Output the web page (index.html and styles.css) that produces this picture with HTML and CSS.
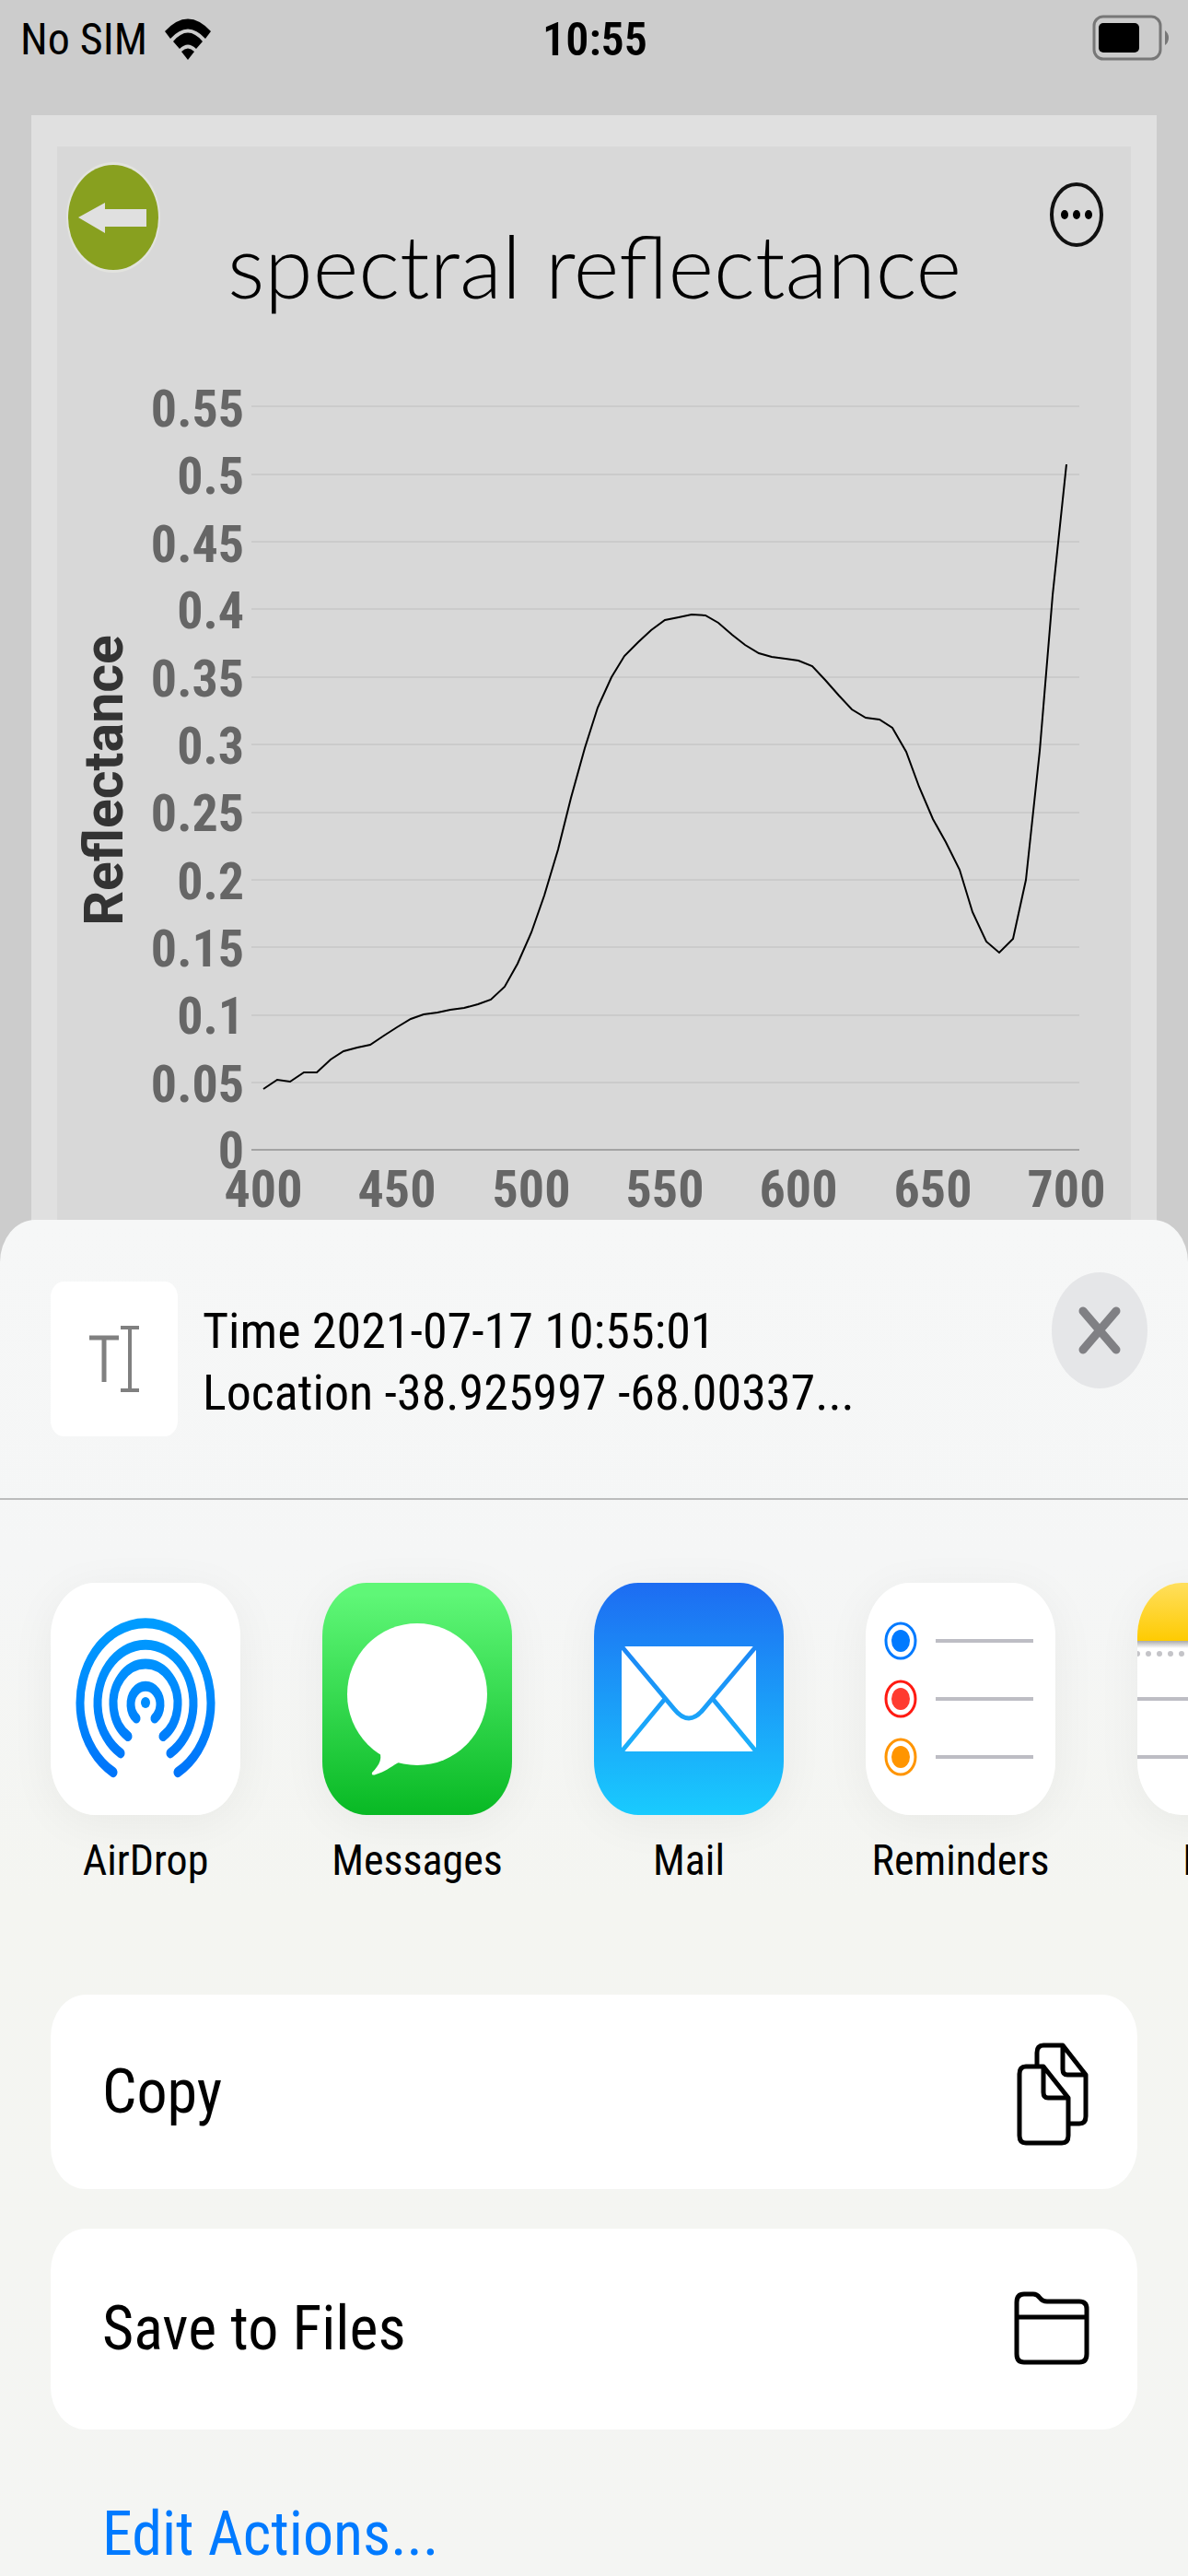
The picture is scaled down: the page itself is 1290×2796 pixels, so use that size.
FILE: index.html
```html
<!DOCTYPE html>
<html lang="en">
<head>
<meta charset="utf-8">
<meta name="viewport" content="width=device-width, initial-scale=1">
<title>spectral reflectance</title>
<link rel="stylesheet" href="styles.css">
</head>
<body>
<div class="statusbar">
  <div class="carrier">
    <span>No SIM</span>
    <svg class="wifi" viewBox="0 0 50 46" aria-hidden="true">
      <path d="M0 14 Q25 -13 50 14 L44 22 Q25 1 6 22 Z"/>
      <path d="M9 25 Q25 6 41 25 L34 33 Q25 24 16 33 Z"/>
      <path d="M18 36 Q25 29 32 36 L25 45 Z"/>
    </svg>
  </div>
  <time class="clock">10:55</time>
  <div class="battery-slot">
    <svg class="battery" viewBox="0 0 84 50" aria-hidden="true">
      <rect x="2" y="2" width="72" height="46" rx="10" fill="none" stroke="#777" stroke-width="3"/>
      <rect x="7" y="9" width="44" height="32" rx="5"/>
      <path d="M79 17 Q83 20 83 25 Q83 30 79 33 Z" fill="#777"/>
    </svg>
  </div>
</div>

<main class="screen">
  <div class="panel">
    <header class="panel-head">
      <button class="icon-button" type="button" aria-label="Back">
        <svg class="back" viewBox="0 0 104 122">
          <ellipse cx="52" cy="61" rx="51" ry="60" fill="#e2e3de"/>
          <ellipse cx="52" cy="61" rx="49" ry="57" fill="#88a01f"/>
          <path d="M14 61 L43 45 V52 H88 V71 H43 V78 Z" fill="#e0e0e0"/>
        </svg>
      </button>
      <h1 class="title">spectral reflectance</h1>
      <button class="icon-button icon-button-more" type="button" aria-label="More">
        <svg class="more" viewBox="0 0 60 72">
          <ellipse cx="30" cy="36" rx="27" ry="33" fill="none" stroke="#111" stroke-width="4"/>
          <ellipse cx="17" cy="36" rx="4" ry="5"/><ellipse cx="30" cy="36" rx="4" ry="5"/><ellipse cx="43" cy="36" rx="4" ry="5"/>
        </svg>
      </button>
    </header>
    <svg class="chart" viewBox="0 0 1166 970" role="img" aria-label="Reflectance by wavelength">
      <path class="grid" d="M211 41H1110M211 115H1110M211 188H1110M211 261H1110M211 335H1110M211 408H1110M211 482H1110M211 555H1110M211 628H1110M211 702H1110M211 775H1110"/>
      <path class="axis" d="M211 848H1110"/>
      <g class="tick tick-y">
        <text x="203" y="63">0.55</text><text x="203" y="136">0.5</text>
        <text x="203" y="210">0.45</text><text x="203" y="282">0.4</text>
        <text x="203" y="356">0.35</text><text x="203" y="429">0.3</text>
        <text x="203" y="502">0.25</text><text x="203" y="576">0.2</text>
        <text x="203" y="649">0.15</text><text x="203" y="722">0.1</text>
        <text x="203" y="796">0.05</text><text x="203" y="868">0</text>
      </g>
      <g class="tick tick-x">
        <text x="224" y="910">400</text><text x="369" y="910">450</text>
        <text x="515" y="910">500</text><text x="660" y="910">550</text>
        <text x="805" y="910">600</text><text x="951" y="910">650</text>
        <text x="1096" y="910">700</text>
      </g>
      <text class="axis-name" transform="translate(71 447) rotate(-90)">Reflectance</text>
      <polyline class="curve" points="224,782 239,772 253,774 268,764 282,764 297,750 311,741 326,737 340,734 355,724 369,715 384,706 398,701 413,699 427,696 442,694 457,690 471,685 486,671 500,646 515,612 529,572 544,522 558,466 573,412 587,368 602,335 616,312 631,297 645,284 660,273 675,270 689,267 704,268 718,276 733,289 747,300 762,309 776,313 791,315 805,317 820,323 834,338 849,355 863,370 878,379 893,381 907,390 922,416 936,454 951,489 965,514 980,544 994,590 1009,622 1023,634 1038,619 1052,555 1067,415 1081,246 1096,104"/>
    </svg>
  </div>
</main>

<section class="sheet" aria-label="Share">
  <header class="sheet-head">
    <div class="thumb">
      <svg class="thumb-icon" viewBox="0 0 58 76" fill="none" stroke="#808080" aria-hidden="true">
        <path d="M2 15H34M18 15V63" stroke-width="5"/>
        <path d="M36 4H56M36 72H56M46 4V72" stroke-width="4"/>
      </svg>
    </div>
    <p class="summary">Time 2021-07-17 10:55:01<br>Location -38.925997 -68.00337...</p>
    <button class="icon-button close-button" type="button" aria-label="Close">
      <svg class="close" viewBox="0 0 104 126">
        <ellipse cx="52" cy="63" rx="52" ry="63" fill="#e5e6e8"/>
        <path d="M34 42 L70 84 M70 42 L34 84" stroke="#808084" stroke-width="9" stroke-linecap="round"/>
      </svg>
    </button>
  </header>

  <nav class="apps" aria-label="Apps">
    <button class="app" type="button">
      <svg class="app-icon" viewBox="0 0 206 252" aria-hidden="true">
        <defs><linearGradient id="air" gradientUnits="userSpaceOnUse" x1="0" y1="-75" x2="0" y2="68"><stop offset="0" stop-color="#009dff"/><stop offset="1" stop-color="#0073fa"/></linearGradient></defs>
        <rect width="206" height="252" fill="#fff"/>
        <g transform="translate(103 130) scale(1 1.22)" fill="none" stroke="url(#air)" stroke-width="9" stroke-linecap="round">
          <path d="M-35 62 A71 71 0 1 1 35 62"/>
          <path d="M-27 45 A52 52 0 1 1 27 45"/>
          <path d="M-19 30 A35 35 0 1 1 19 30"/>
          <path d="M-10 14 A16 16 0 1 1 10 14"/>
          <circle r="5" fill="#008cfd" stroke="none"/>
        </g>
      </svg>
      <span>AirDrop</span>
    </button>
    <button class="app" type="button">
      <svg class="app-icon" viewBox="0 0 206 252" aria-hidden="true">
        <defs><linearGradient id="msg" x2="0" y2="1"><stop offset="0.05" stop-color="#5ff777"/><stop offset="1" stop-color="#08b924"/></linearGradient></defs>
        <rect width="206" height="252" fill="url(#msg)"/>
        <ellipse cx="103" cy="121" rx="76" ry="77" fill="#fff"/>
        <path d="M60 180 C67 189 62 198 54 206 C53 209 56 209 58 208 C68 205 74 200 81 196 L100 185 Z" fill="#fff"/>
      </svg>
      <span>Messages</span>
    </button>
    <button class="app" type="button">
      <svg class="app-icon" viewBox="0 0 206 252" aria-hidden="true">
        <defs><linearGradient id="mail" gradientUnits="userSpaceOnUse" x1="0" y1="0" x2="0" y2="252"><stop offset="0" stop-color="#1d6cf2"/><stop offset="1" stop-color="#19cbfe"/></linearGradient></defs>
        <rect width="206" height="252" fill="url(#mail)"/>
        <rect x="30" y="69" width="146" height="114" rx="5" fill="#fff"/>
        <g fill="none" stroke="url(#mail)" stroke-width="5">
          <path d="M30 69 L87 137 Q103 157 119 137 L176 69"/>
          <path d="M77 126 L30 183 M129 126 L176 183"/>
        </g>
      </svg>
      <span>Mail</span>
    </button>
    <button class="app" type="button">
      <svg class="app-icon" viewBox="0 0 206 252" aria-hidden="true">
        <rect width="206" height="252" fill="#fff"/>
        <path d="M76 63H182M76 126H182M76 189H182" stroke="#bdbdc4" stroke-width="4"/>
        <g fill="none" stroke-width="3">
          <ellipse cx="38" cy="63" rx="16" ry="19" stroke="#007aff"/><ellipse cx="38" cy="126" rx="16" ry="19" stroke="#ff1a12"/><ellipse cx="38" cy="189" rx="16" ry="19" stroke="#ff9500"/>
        </g>
        <ellipse cx="38" cy="63" rx="10" ry="12" fill="#007aff"/><ellipse cx="38" cy="126" rx="10" ry="12" fill="#ff3b30"/><ellipse cx="38" cy="189" rx="10" ry="12" fill="#ff9500"/>
      </svg>
      <span>Reminders</span>
    </button>
    <button class="app" type="button">
      <svg class="app-icon" viewBox="0 0 206 252" aria-hidden="true">
        <defs>
          <linearGradient id="note" x2="0" y2="1"><stop offset="0" stop-color="#ffdf5e"/><stop offset="1" stop-color="#fecb02"/></linearGradient>
          <linearGradient id="fold" x2="0" y2="1"><stop offset="0" stop-color="#aaa"/><stop offset="1" stop-color="#fff"/></linearGradient>
        </defs>
        <rect width="206" height="252" fill="#fff"/>
        <rect width="206" height="63" fill="url(#note)"/>
        <rect y="63" width="206" height="8" fill="url(#fold)"/>
        <path d="M0 77H206" stroke="#c4c4c8" stroke-width="6" stroke-linecap="round" stroke-dasharray="0 12"/>
        <path d="M0 126H206M0 189H206" stroke="#bdbdc4" stroke-width="4"/>
      </svg>
      <span>Notes</span>
    </button>
  </nav>

  <div class="actions">
    <button class="action" type="button">
      <span>Copy</span>
      <svg class="action-icon" viewBox="0 0 88 120" fill="none" stroke="#000" stroke-width="5" stroke-linejoin="round" aria-hidden="true">
        <path d="M30 32 V17 Q30 9 37 9 H58 L83 41 V86 Q83 94 76 94 H65 M58 9 V35 Q58 41 63 41 H83"/>
        <path d="M37 32 H18 Q11 32 11 40 V107 Q11 115 18 115 H57 Q64 115 64 107 V66 Z M37 32 V60 Q37 66 42 66 H64"/>
      </svg>
    </button>
    <button class="action action-files" type="button">
      <span>Save to Files</span>
      <svg class="action-icon" viewBox="0 0 88 120" fill="none" stroke="#000" stroke-width="5" stroke-linejoin="round" aria-hidden="true">
        <path d="M8 31 Q8 22 16 22 H26 Q30 22 33 26 Q36 30 41 30 H76 Q84 30 84 38 V87 Q84 96 76 96 H16 Q8 96 8 87 Z M8 47 H84"/>
      </svg>
    </button>
    <a class="edit" href="#">Edit Actions...</a>
  </div>
</section>
</body>
</html>
```
FILE: styles.css
```css
* { box-sizing: border-box; }

body {
  margin: 0;
  min-height: 100vh;
  display: flex;
  flex-direction: column;
  background: #ccc;
  color: #000;
  font-family: "Roboto Condensed", "Liberation Sans Narrow", Roboto, sans-serif;
  overflow-x: hidden;
}

button {
  border: 0;
  padding: 0;
  margin: 0;
  background: none;
  color: inherit;
  font: inherit;
  cursor: pointer;
}

svg { display: block; flex: none; }

.statusbar {
  display: grid;
  grid-template-columns: 1fr auto 1fr;
  align-items: end;
  padding: 16px 20px 0 22px;
  font-size: 48px;
  line-height: 50px;
}
.carrier { display: flex; align-items: end; gap: 19px; }
.carrier span, .clock { line-height: 46px; }
.wifi { width: 50px; height: 46px; }
.clock { font-size: 50px; font-weight: 600; }
.battery-slot { display: flex; justify-content: flex-end; }
.battery { width: 84px; height: 50px; }

.screen { padding: 59px 34px 0; }
.panel {
  border: solid #e0e0e0;
  border-width: 34px 28px 0;
  background: #d8d8d8;
}
.panel-head {
  display: grid;
  grid-template-columns: 116px 1fr 124px;
  align-items: start;
  padding: 16px 0 0 9px;
  height: 241px;
}
.icon-button { flex: none; border-radius: 50%; }
.back { width: 104px; height: 122px; }
.icon-button-more { justify-self: end; margin: 22px 29px 0 0; }
.more { width: 60px; height: 72px; }
.title {
  margin: 0;
  padding-top: 52px;
  font-family: Lato, sans-serif;
  font-weight: 300;
  font-size: 95px;
  line-height: 120px;
  text-align: center;
  white-space: nowrap;
}

.chart { width: 100%; height: auto; }
.grid { stroke: #cbcbcb; stroke-width: 2; }
.axis { stroke: #a3a3a3; stroke-width: 2; }
.curve { fill: none; stroke: #000; stroke-width: 2; }
.tick {
  font-family: "Roboto Condensed", "Liberation Sans Narrow", Roboto, sans-serif;
  font-size: 56px;
  font-weight: 700;
  fill: #666;
}
.tick-y { text-anchor: end; }
.tick-x { text-anchor: middle; }
.axis-name {
  font-family: Roboto, sans-serif;
  font-size: 59px;
  font-weight: 700;
  fill: #333;
  text-anchor: middle;
}

.sheet {
  position: relative;
  flex: 1;
  margin-top: -46px;
  border-radius: 38px 38px 0 0 / 46px 46px 0 0;
  background: linear-gradient(#f6f7f7, #f5f6f6 25%, #f4f5f1 50%, #f4f5f3);
}
.sheet-head {
  display: flex;
  align-items: center;
  gap: 27px;
  height: 304px;
  padding: 0 44px 0 55px;
  border-bottom: 2px solid #bcbcbc;
}
.thumb {
  flex: none;
  display: grid;
  place-items: center;
  width: 138px;
  height: 168px;
  border-radius: 14px / 17px;
  background: #fff;
}
.thumb-icon { width: 58px; height: 76px; }
.summary {
  flex: 1;
  margin: 0;
  padding-top: 6px;
  font-size: 54px;
  line-height: 67px;
}
.close-button { align-self: start; margin-top: 57px; }
.close { width: 104px; height: 126px; }

.apps {
  display: flex;
  gap: 89px;
  padding: 90px 55px 98px;
  overflow: hidden;
}
.app {
  flex: none;
  width: 206px;
  display: flex;
  flex-direction: column;
  align-items: center;
  gap: 21px;
  font-size: 46px;
  line-height: 56px;
}
.app-icon {
  width: 206px;
  height: 252px;
  border-radius: 48px / 58px;
  box-shadow: 0 8px 50px rgba(0, 0, 0, .05);
}

.actions {
  display: flex;
  flex-direction: column;
  gap: 43px;
  padding: 20px 55px 0;
}
.action {
  display: flex;
  align-items: center;
  justify-content: space-between;
  padding: 46px 51px 45px 56px;
  border-radius: 38px / 46px;
  background: #fff;
  font-size: 66px;
  line-height: 80px;
}
.action-files { padding-block: 49px; }
.action-icon { width: 88px; height: 120px; }
.edit {
  padding: 31px 56px 0;
  color: #007aff;
  font-size: 66px;
  line-height: 80px;
  text-decoration: none;
}
```
